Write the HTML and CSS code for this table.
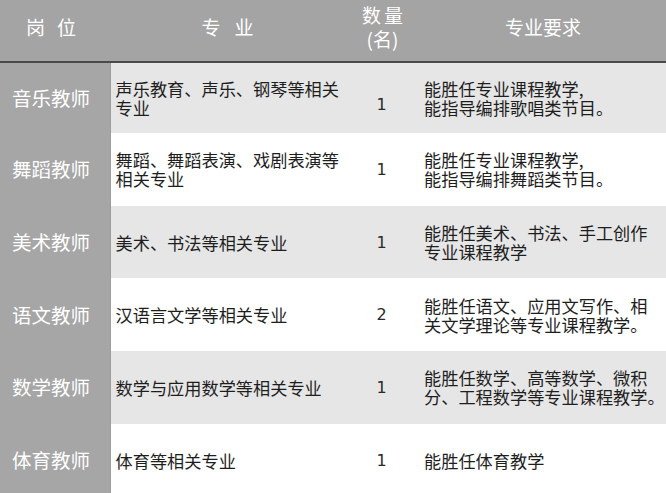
FILE: index.html
```html
<!DOCTYPE html>
<html lang="zh">
<head>
<meta charset="utf-8">
<title>岗位表</title>
<link rel="stylesheet" href="styles.css">
</head>
<body>
<table class="jobs">
  <colgroup>
    <col class="c-post">
    <col class="c-major">
    <col class="c-num">
    <col class="c-req">
  </colgroup>
  <thead>
    <tr>
      <th class="h-post">岗位</th>
      <th class="h-major">专业</th>
      <th class="h-num"><span class="h-num-top">数量</span><br>(名)</th>
      <th class="h-req">专业要求</th>
    </tr>
  </thead>
  <tbody>
    <tr class="shade r1">
      <th class="post">音乐教师</th>
      <td class="major">声乐教育、声乐、钢琴等相关<br>专业</td>
      <td class="num num-low">1</td>
      <td class="req">能胜任专业课程教学,<br>能指导编排歌唱类节目。</td>
    </tr>
    <tr class="r2">
      <th class="post">舞蹈教师</th>
      <td class="major">舞蹈、舞蹈表演、戏剧表演等<br>相关专业</td>
      <td class="num">1</td>
      <td class="req">能胜任专业课程教学,<br>能指导编排舞蹈类节目。</td>
    </tr>
    <tr class="shade r3">
      <th class="post">美术教师</th>
      <td class="major">美术、书法等相关专业</td>
      <td class="num">1</td>
      <td class="req">能胜任美术、书法、手工创作<br>专业课程教学</td>
    </tr>
    <tr class="r4">
      <th class="post">语文教师</th>
      <td class="major">汉语言文学等相关专业</td>
      <td class="num">2</td>
      <td class="req">能胜任语文、应用文写作、相<br>关文学理论等专业课程教学。</td>
    </tr>
    <tr class="shade r5">
      <th class="post">数学教师</th>
      <td class="major">数学与应用数学等相关专业</td>
      <td class="num">1</td>
      <td class="req">能胜任数学、高等数学、微积<br>分、工程数学等专业课程教学。</td>
    </tr>
    <tr class="r6">
      <th class="post">体育教师</th>
      <td class="major">体育等相关专业</td>
      <td class="num">1</td>
      <td class="req">能胜任体育教学</td>
    </tr>
  </tbody>
</table>
</body>
</html>
```

FILE: styles.css
```css
html, body {
  margin: 0;
  padding: 0;
  background: #ffffff;
}

body {
  width: 666px;
  height: 493px;
  overflow: hidden;
  font-family: "Noto Sans CJK SC", "Noto Sans", sans-serif;
}

.jobs {
  width: 666px;
  table-layout: fixed;
  border-collapse: collapse;
  border-spacing: 0;
}

.c-post { width: 110px; }
.c-major { width: 235px; }
.c-num { width: 75px; }
.c-req { width: 246px; }

.jobs th,
.jobs td {
  padding: 0;
  vertical-align: middle;
}

/* header */
.jobs thead th {
  height: 53px;
  padding-bottom: 8px;
  background: #a4a4a4;
  color: #ffffff;
  font-weight: normal;
  font-size: 19px;
  line-height: 24px;
  text-align: center;
  border-bottom: 2px solid #4a4a4a;
}

.h-post {
  letter-spacing: 12px;
  text-indent: 4px;
}

.h-major {
  letter-spacing: 14px;
  text-indent: 14px;
}

.h-num {
  font-size: 19px;
  line-height: 25px;
}

.h-num-top {
  letter-spacing: 3px;
  margin-right: -3px;
}

.h-req {
  font-size: 20px;
  padding-left: 4px;
}

/* body rows */
.jobs tbody tr {
  height: 72.7px;
  background: #ffffff;
}

.jobs tbody tr.shade {
  background: #e6e6e6;
}

.jobs tbody tr.r1 {
  height: 71px;
}

.post {
  background: #a6a6a6;
  border-right: 1px solid #9c9c9c;
  color: #ffffff;
  font-weight: normal;
  font-size: 19.5px;
  line-height: 24px;
  text-align: left;
  padding-left: 12px !important;
  white-space: nowrap;
}

.major {
  padding-left: 5px !important;
  color: #1e1e1e;
  font-size: 17.2px;
  line-height: 19px;
  white-space: nowrap;
}

.num {
  text-align: center;
  color: #2a2a2a;
  font-family: "DejaVu Sans", "Noto Sans CJK SC", sans-serif;
  font-size: 16px;
  line-height: 19px;
  padding-right: 2px !important;
}

.num-low {
  padding-top: 12px !important;
}

.req {
  padding-left: 4px !important;
  color: #1e1e1e;
  font-size: 17.2px;
  line-height: 19px;
  white-space: nowrap;
}
```
